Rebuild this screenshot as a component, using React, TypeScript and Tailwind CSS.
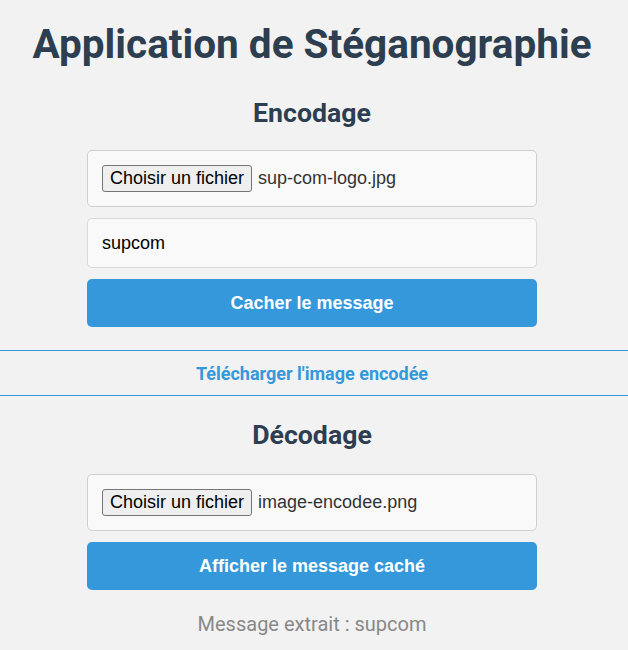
import React, { useState } from 'react';

// faux champ fichier : le bouton natif serait en anglais dans le navigateur
const FileField: React.FC<{ fileName: string }> = ({ fileName }) => (
  <label className="flex h-[57px] items-center rounded-[5px] border border-[#cfcfcf] bg-[#f9f9f9] px-[14px] font-['Liberation_Sans',Arial,sans-serif] text-[18px] cursor-pointer">
    <input type="file" className="hidden" />
    <span className="rounded-[3px] border border-[#767676] bg-[#efefef] px-[7px] py-[2px] leading-[21px] text-black">
      Choisir un fichier
    </span>
    <span className="ml-[6px] text-[#333]">{fileName}</span>
  </label>
);

const ActionButton: React.FC<{ label: string; onClick?: () => void }> = ({ label, onClick }) => (
  <button
    onClick={onClick}
    className="h-[48px] w-full rounded-[5px] bg-[#3498db] font-['Liberation_Sans',Arial,sans-serif] text-[18px] font-bold text-white hover:bg-[#2980b9]"
  >
    {label}
  </button>
);

const App: React.FC = () => {
  const [message, setMessage] = useState('supcom');
  const [extracted, setExtracted] = useState('supcom');

  return (
    <div className="min-h-screen bg-[#f2f2f2] pb-4 pr-[4px] font-['Roboto',sans-serif]">
      <h1 className="pt-[20px] text-center text-[40.5px] leading-[48px] font-bold text-[#2c3e50]">
        Application de Stéganographie
      </h1>

      {/* --- Encodage --- */}
      <h2 className="mt-[29px] text-center text-[26.7px] leading-[32px] font-bold text-[#2c3e50]">Encodage</h2>
      <div className="mx-auto mt-[21px] flex w-[450px] flex-col gap-[11px]">
        <FileField fileName="sup-com-logo.jpg" />
        <input
          type="text"
          value={message}
          onChange={e => setMessage(e.target.value)}
          className="h-[50px] rounded-[5px] border border-[#d9d9d9] bg-[#f9f9f9] px-[14px] font-['Liberation_Sans',Arial,sans-serif] text-[18px] text-black outline-none"
        />
        <ActionButton label="Cacher le message" />
      </div>

      <div className="-mr-[4px] mt-[23px] flex h-[46px] items-center justify-center border-y border-[#3498db] pr-[4px]">
        <a href="#" className="text-[18px] font-bold text-[#3498db]">
          Télécharger l'image encodée
        </a>
      </div>

      {/* --- Décodage --- */}
      <h2 className="mt-[23px] text-center text-[26.7px] leading-[32px] font-bold text-[#2c3e50]">Décodage</h2>
      <div className="mx-auto mt-[23px] flex w-[450px] flex-col gap-[11px]">
        <FileField fileName="image-encodee.png" />
        <ActionButton label="Afficher le message caché" onClick={() => setExtracted(message)} />
      </div>

      <p className="mt-[22px] text-center text-[20px] leading-[24px] text-[#888]">Message extrait : {extracted}</p>
    </div>
  );
};

export default App;
